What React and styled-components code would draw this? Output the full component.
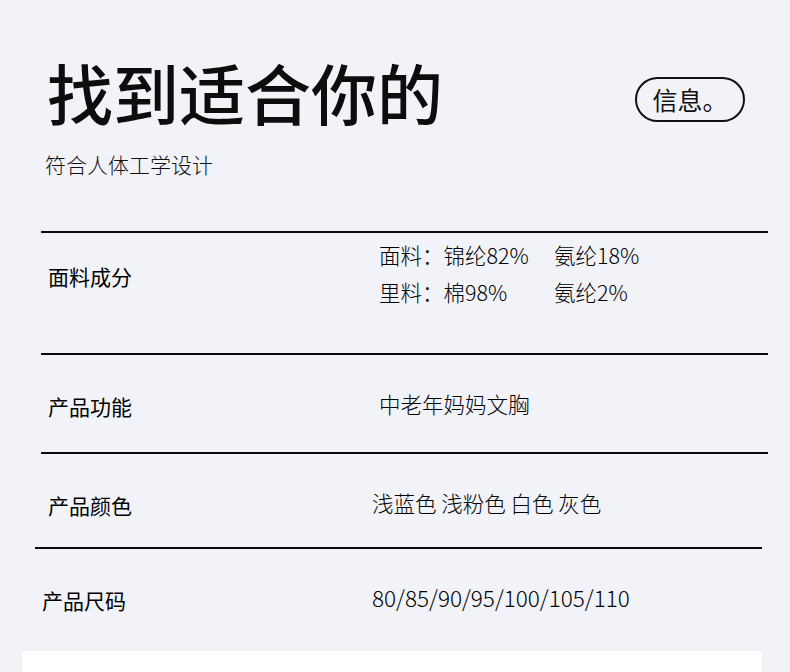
import React from 'react';
import styled, { createGlobalStyle } from 'styled-components';

const GlobalStyle = createGlobalStyle`
  body {
    margin: 0;
    background: #f2f3f9;
    font-family: "Noto Sans CJK SC", "Noto Sans", sans-serif;
    color: #111;
  }
`;

const Page = styled.div`
  width: 790px;
  height: 672px;
  overflow: hidden;
  background: #f2f3f9;
  display: flex;
  flex-direction: column;
`;

const Header = styled.header`
  padding: 58px 45px 0 47px;
`;

const TitleRow = styled.div`
  display: flex;
  align-items: flex-start;
  justify-content: space-between;
`;

const Title = styled.h1`
  margin: 0;
  font-size: 66px;
  line-height: 1;
  font-weight: 500;
  color: #0d0d0d;
`;

const Pill = styled.div`
  border: 2px solid #111;
  border-radius: 24px;
  width: 106px;
  height: 41px;
  display: flex;
  align-items: center;
  justify-content: center;
  font-size: 25px;
  line-height: 1;
  margin-top: 19px;
`;

const Subtitle = styled.p`
  margin: 30px 0 0 -2px;
  font-size: 21px;
  line-height: 1;
  font-weight: 300;
  color: #111;
`;

const Table = styled.section`
  margin: 56px 22px 0 41px;
`;

const Row = styled.div`
  display: grid;
  grid-template-columns: ${(p) => p.$labelCol}px 1fr;
  height: ${(p) => p.$height}px;
  box-sizing: border-box;
  border-top: 2px solid #0a0a0a;
  padding-left: 7px;
  margin-left: ${(p) => -(p.$shift || 0)}px;
  margin-right: ${(p) => p.$shift || 0}px;
`;

const Label = styled.div`
  font-size: 21px;
  line-height: 1;
  font-weight: 400;
  color: #000;
  padding-top: ${(p) => p.$top}px;
`;

const Value = styled.div`
  font-size: ${(p) => p.$size || 21.5}px;
  line-height: 1;
  font-weight: 300;
  color: #000;
  padding-top: ${(p) => p.$top}px;
`;

const Lines = styled.div`
  display: grid;
  grid-template-columns: 175px auto;
  row-gap: 15px;
  justify-content: start;
`;

const Panel = styled.div`
  margin: 0 28px 0 22px;
  flex: 1;
  background: #ffffff;
`;

const rows = [
  { label: '产品功能', value: '中老年妈妈文胸', height: 99, labelCol: 331, labelTop: 41, valueTop: 38 },
  { label: '产品颜色', value: '浅蓝色 浅粉色 白色 灰色', height: 95, labelCol: 324, labelTop: 41, valueTop: 38 },
  { label: '产品尺码', value: '80/85/90/95/100/105/110', height: 104, labelCol: 330, labelTop: 41, valueTop: 37, size: 22.5, shift: 6 },
];

export default function App() {
  return (
    <>
      <GlobalStyle />
      <Page>
        <Header>
          <TitleRow>
            <Title>找到适合你的</Title>
            <Pill>信息。</Pill>
          </TitleRow>
          <Subtitle>符合人体工学设计</Subtitle>
        </Header>
        <Table>
          <Row $labelCol={331} $height={122}>
            <Label $top={33}>面料成分</Label>
            <Value $top={11}>
              <Lines>
                <span>面料：锦纶82%</span>
                <span>氨纶18%</span>
                <span>里料：棉98%</span>
                <span>氨纶2%</span>
              </Lines>
            </Value>
          </Row>
          {rows.map((r) => (
            <Row key={r.label} $labelCol={r.labelCol} $height={r.height} $shift={r.shift}>
              <Label $top={r.labelTop}>{r.label}</Label>
              <Value $top={r.valueTop} $size={r.size}>{r.value}</Value>
            </Row>
          ))}
        </Table>
        <Panel />
      </Page>
    </>
  );
}
